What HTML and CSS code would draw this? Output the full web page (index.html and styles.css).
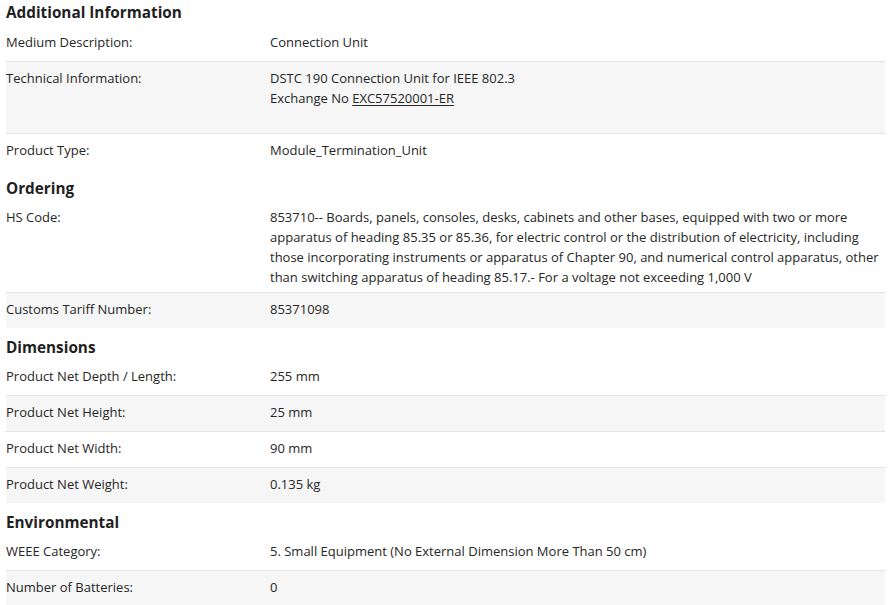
FILE: index.html
```html
<!DOCTYPE html>
<html lang="en">
<head>
<meta charset="utf-8">
<title>Product details</title>
<link rel="stylesheet" href="styles.css">
</head>
<body>
<main class="specs">
  <section class="group group-first">
    <h2 class="group-title">Additional Information</h2>
    <div class="row">
      <div class="label">Medium Description:</div>
      <div class="value">Connection Unit</div>
    </div>
    <div class="row alt">
      <div class="label">Technical Information:</div>
      <div class="value">
        <div>DSTC 190 Connection Unit for IEEE 802.3</div>
        <div>Exchange No <a class="link" href="#">EXC57520001-ER</a></div>
        <div class="blank"></div>
      </div>
    </div>
    <div class="row">
      <div class="label">Product Type:</div>
      <div class="value">Module_Termination_Unit</div>
    </div>
  </section>

  <section class="group">
    <h2 class="group-title">Ordering</h2>
    <div class="row">
      <div class="label">HS Code:</div>
      <div class="value">853710-- Boards, panels, consoles, desks, cabinets and other bases, equipped with two or more apparatus of heading 85.35 or 85.36, for electric control or the distribution of electricity, including those incorporating instruments or apparatus of Chapter 90, and numerical control apparatus, other than switching apparatus of heading 85.17.- For a voltage not exceeding 1,000 V</div>
    </div>
    <div class="row alt">
      <div class="label">Customs Tariff Number:</div>
      <div class="value">85371098</div>
    </div>
  </section>

  <section class="group">
    <h2 class="group-title">Dimensions</h2>
    <div class="row">
      <div class="label">Product Net Depth / Length:</div>
      <div class="value">255 mm</div>
    </div>
    <div class="row alt">
      <div class="label">Product Net Height:</div>
      <div class="value">25 mm</div>
    </div>
    <div class="row">
      <div class="label">Product Net Width:</div>
      <div class="value">90 mm</div>
    </div>
    <div class="row alt">
      <div class="label">Product Net Weight:</div>
      <div class="value">0.135 kg</div>
    </div>
  </section>

  <section class="group">
    <h2 class="group-title">Environmental</h2>
    <div class="row">
      <div class="label">WEEE Category:</div>
      <div class="value">5. Small Equipment (No External Dimension More Than 50 cm)</div>
    </div>
    <div class="row alt">
      <div class="label">Number of Batteries:</div>
      <div class="value">0</div>
    </div>
  </section>
</main>
</body>
</html>
```
FILE: styles.css
```css
html, body {
  margin: 0;
  padding: 0;
  background: #ffffff;
}

body {
  font-family: "Open Sans", "Liberation Sans", sans-serif;
  font-size: 13px;
  line-height: 20px;
  color: #262626;
}

.specs {
  width: 879px;
  margin-left: 6px;
  display: flex;
  flex-direction: column;
}

.group {
  display: flex;
  flex-direction: column;
}

.group-title {
  margin: 0;
  padding: 8px 0 2px;
  font-size: 15.3px;
  font-weight: 700;
  line-height: 22px;
  color: #1f1f1f;
}

.group-first .group-title {
  padding-top: 1px;
  padding-bottom: 3px;
}

.row {
  display: grid;
  grid-template-columns: 264px 1fr;
  box-sizing: content-box;
  min-height: 24px;
  padding: 6px 0 5px;
  border-bottom: 1px solid #e3e3e3;
  background: #ffffff;
}

.row:last-child {
  border-bottom: none;
}

.row.alt {
  background: #f6f6f6;
}

.blank {
  height: 20px;
}

.link {
  color: #262626;
  text-decoration: underline;
  text-underline-offset: 2px;
}
```
